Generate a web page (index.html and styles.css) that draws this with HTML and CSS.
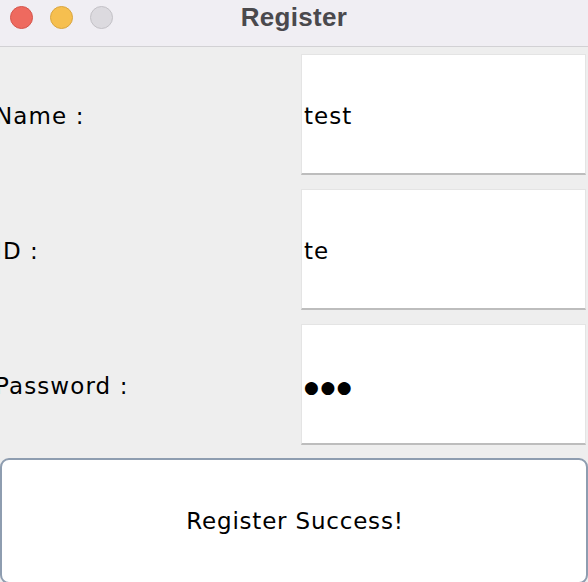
FILE: index.html
```html
<!DOCTYPE html>
<html>
<head>
<meta charset="utf-8">
<title>Register</title>
<link rel="stylesheet" href="styles.css">
</head>
<body>
<div class="window">
  <div class="titlebar">
    <div class="lights">
      <span class="light red"></span>
      <span class="light yellow"></span>
      <span class="light gray"></span>
    </div>
    <div class="title">Register</div>
  </div>
  <div class="content">
    <div class="form">
      <div class="label">Name :</div>
      <div class="field">test</div>
      <div class="label">ID :</div>
      <div class="field">te</div>
      <div class="label">Password :</div>
      <div class="field dots">●●●</div>
    </div>
    <div class="button">Register Success!</div>
  </div>
</div>
</body>
</html>
```
FILE: styles.css
```css
html, body {
  margin: 0;
  padding: 0;
  width: 588px;
  height: 582px;
  overflow: hidden;
  background: #eeeeee;
}
.window {
  display: flex;
  flex-direction: column;
  width: 588px;
  height: 582px;
  overflow: hidden;
}
.titlebar {
  position: relative;
  height: 46px;
  background: #f0eef3;
  border-bottom: 1px solid #d2d1d4;
  display: flex;
  align-items: center;
  justify-content: center;
  flex-shrink: 0;
}
.lights {
  position: absolute;
  left: 10px;
  top: 6px;
  display: flex;
  gap: 17px;
}
.light {
  width: 21px;
  height: 21px;
  border-radius: 50%;
  border: 1px solid transparent;
}
.red { background: #ee6a5f; border-color: #d5554b; }
.yellow { background: #f6bf4f; border-color: #d9a53f; }
.gray { background: #dcdadf; border-color: #c3c1c6; }
.title {
  font-family: "Liberation Sans", Arial, sans-serif;
  font-weight: bold;
  font-size: 26px;
  color: #4a494d;
  letter-spacing: 0.3px;
  margin-top: -11px;
  margin-left: 0;
}
.content {
  flex: 1;
  display: flex;
  flex-direction: column;
  padding-top: 7px;
}
.form {
  display: grid;
  grid-template-columns: 1fr 285px;
  grid-auto-rows: 121px;
  row-gap: 14px;
  padding-right: 2px;
  align-items: center;
}
.label {
  font-family: "DejaVu Sans", sans-serif;
  font-size: 23px;
  letter-spacing: 1.1px;
  color: #000;
  margin-left: -5px;
  margin-top: 3px;
}
.field {
  box-sizing: border-box;
  height: 121px;
  background: #ffffff;
  border: 1px solid #e4e4e4;
  border-bottom: 2px solid #bdbdbd;
  display: flex;
  align-items: center;
  padding-left: 2px;
  padding-top: 3px;
  font-family: "DejaVu Sans", sans-serif;
  font-size: 23px;
  letter-spacing: 1px;
  color: #000;
}
.dots {
  font-size: 17px;
  letter-spacing: 1.6px;
  padding-top: 5px;
}
.button {
  margin-top: 13px;
  height: 126px;
  flex-shrink: 0;
  box-sizing: border-box;
  background: #ffffff;
  border: 2px solid #8e9db0;
  border-radius: 9px;
  display: flex;
  align-items: center;
  justify-content: center;
  font-family: "DejaVu Sans", sans-serif;
  font-size: 23px;
  letter-spacing: 0.8px;
  color: #000;
  padding-left: 2px;
}
```
